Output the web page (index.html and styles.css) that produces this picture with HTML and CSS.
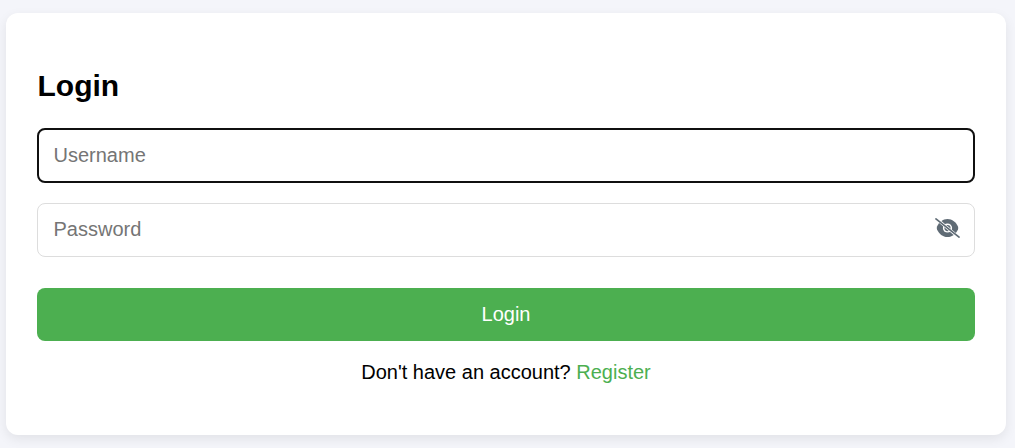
FILE: index.html
```html
<!DOCTYPE html>
<html lang="en">
<head>
    <meta charset="UTF-8">
    <meta name="viewport" content="width=device-width, initial-scale=1.0">
    <title>Login</title>
    <link rel="stylesheet" href="styles.css">
</head>
<body>
    <div class="card">
        <h2 class="title">Login</h2>
        <form class="form">
            <div class="field">
                <input class="input input-focus" type="text" placeholder="Username">
            </div>
            <div class="field">
                <input class="input" type="password" placeholder="Password">
                <svg class="eye" viewBox="0 0 640 512" width="25" height="20">
                    <!-- eye body -->
                    <path fill="currentColor" d="M320 26C200 26 100 110 52 220c-10 24-10 48 0 72 48 110 148 194 268 194s220-84 268-194c10-24 10-48 0-72C540 110 440 26 320 26z"/>
                    <circle fill="#fff" cx="320" cy="256" r="118"/>
                    <circle fill="currentColor" cx="320" cy="256" r="80"/>
                    <!-- slash -->
                    <path stroke="#fff" stroke-width="76" d="M60 40l520 432"/>
                    <path stroke="currentColor" stroke-width="44" stroke-linecap="round" d="M24 24l592 464"/>
                </svg>
            </div>
            <button class="submit" type="button">Login</button>
        </form>
        <p class="switch">Don't have an account? <a class="link" href="#">Register</a></p>
    </div>
</body>
</html>
```

FILE: styles.css
```css
/* base */
* {
    box-sizing: border-box;
}

body {
    margin: 0;
    height: 448px;
    padding: 13px 9px 13px 6px;
    background: #f4f5fa;
    font-family: "Liberation Sans", Arial, sans-serif;
    overflow: hidden;
}

/* card */
.card {
    height: 422px;
    background: #fff;
    border-radius: 12px;
    padding: 55px 31px 0;
    box-shadow: 0 4px 12px rgba(0, 0, 0, 0.08);
}

.title {
    margin: 0 0 24px 0.5px;
    font-size: 30px;
    line-height: 36px;
    font-weight: bold;
    color: #000;
}

/* form */
.form {
    display: flex;
    flex-direction: column;
}

.field {
    position: relative;
    margin-bottom: 19.5px;
}

.input {
    display: block;
    width: 100%;
    height: 54px;
    padding: 0 15.5px;
    border: 1px solid #ddd;
    border-radius: 8px;
    font-family: inherit;
    font-size: 20px;
    background: #fff;
    outline: none;
}

.input::placeholder {
    color: #757575;
}

.input-focus {
    height: 55px;
    border: 2px solid #101010;
    padding: 0 14.5px;
}

.eye {
    position: absolute;
    right: 15px;
    top: 15.5px;
    color: #5f6b75;
}

.submit {
    margin-top: 12px;
    height: 53px;
    border: none;
    border-radius: 8px;
    background: #4caf50;
    color: #fff;
    font-family: inherit;
    font-size: 20px;
    cursor: pointer;
}

.switch {
    margin: 20px 0 0;
    text-align: center;
    font-size: 20px;
    line-height: 23px;
    color: #000;
}

.link {
    color: #4caf50;
    text-decoration: none;
}
```
